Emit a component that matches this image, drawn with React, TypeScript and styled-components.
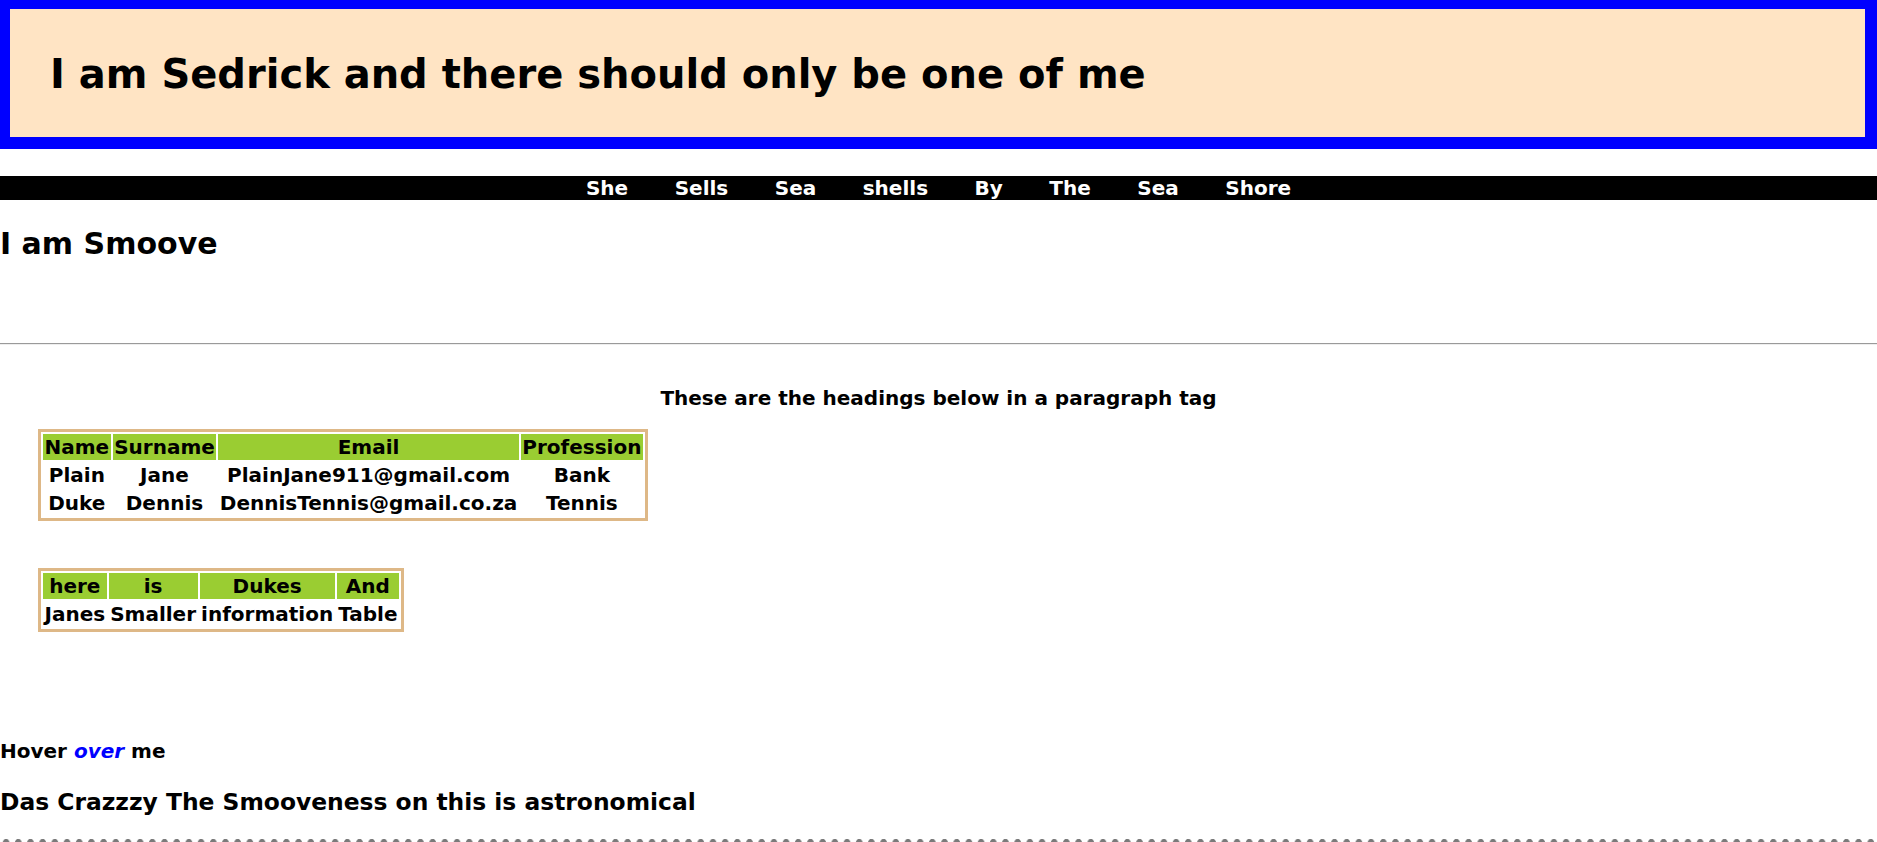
import React from "react";
import styled, { createGlobalStyle } from "styled-components";

const GlobalStyle = createGlobalStyle`
  html, body { margin: 0; padding: 0; background: #ffffff; }
  body {
    font-family: "DejaVu Sans", Verdana, sans-serif;
    font-weight: bold;
    color: #000000;
  }
`;

const Page = styled.div`
  display: flex;
  flex-direction: column;
  width: 100%;
`;

const Banner = styled.header`
  display: flex;
  align-items: center;
  height: 128px;
  border-style: solid;
  border-color: #0000ff;
  border-width: 9px 12px 12px 10px;
  background: #ffe4c4;
  padding-left: 40px;
`;

const BannerTitle = styled.h1`
  margin: 2px 0 0;
  font-size: 40px;
  line-height: 48px;
  font-weight: bold;
`;

const NavBar = styled.nav`
  margin-top: 27px;
  height: 24px;
  background: #000000;
  display: flex;
  justify-content: center;
  gap: 46.5px;
`;

const NavItem = styled.span`
  color: #ffffff;
  font-size: 20px;
  line-height: 24px;
  font-weight: bold;
`;

const SubTitle = styled.h2`
  margin: 26px 0 0;
  font-size: 30px;
  line-height: 35px;
  font-weight: bold;
`;

const Divider = styled.hr`
  margin: 82px 0 0;
  height: 0;
  border: 0;
  border-top: 1px solid #9a9a9a;
  border-bottom: 1px solid #eeeeee;
`;

const Intro = styled.p`
  margin: 41px 0 0;
  text-align: center;
  font-size: 20px;
  line-height: 24px;
`;

const Table = styled.table<{ $gap: number }>`
  margin: ${(p) => p.$gap}px 0 0 38px;
  align-self: flex-start;
  border: 3px solid #deb887;
  border-spacing: 2px;
  font-size: 20px;
  line-height: 24px;
  font-weight: bold;
`;

const HeadCell = styled.th`
  background: #9acd32;
  padding: 1px 1.5px;
  text-align: center;
`;

const Cell = styled.td`
  padding: 1px 1.5px;
  text-align: center;
`;

const HoverLine = styled.p`
  margin: 107px 0 0;
  font-size: 20px;
  line-height: 24px;
`;

const Accent = styled.em`
  color: #0000ff;
`;

const Closing = styled.h3`
  margin: 25px 0 0;
  font-size: 23.4px;
  line-height: 28px;
  font-weight: bold;
`;

const DottedRule = styled.div`
  margin-top: 21px;
  height: 10px;
  background-image: radial-gradient(circle at center, #7a7a7a 0, #7a7a7a 2.8px, transparent 3.4px);
  background-size: 12.2px 10px;
  background-repeat: repeat-x;
  background-position: 0 0;
`;

const navItems = ["She", "Sells", "Sea", "shells", "By", "The", "Sea", "Shore"];

const people = [
  ["Plain", "Jane", "PlainJane911@gmail.com", "Bank"],
  ["Duke", "Dennis", "DennisTennis@gmail.co.za", "Tennis"],
];

export default function App() {
  return (
    <Page>
      <GlobalStyle />
      <Banner>
        <BannerTitle>I am Sedrick and there should only be one of me</BannerTitle>
      </Banner>
      <NavBar>
        {navItems.map((n, i) => (
          <NavItem key={i}>{n}</NavItem>
        ))}
      </NavBar>
      <SubTitle>I am Smoove</SubTitle>
      <Divider />
      <Intro>These are the headings below in a paragraph tag</Intro>
      <Table $gap={19}>
        <thead>
          <tr>
            <HeadCell>Name</HeadCell>
            <HeadCell>Surname</HeadCell>
            <HeadCell>Email</HeadCell>
            <HeadCell>Profession</HeadCell>
          </tr>
        </thead>
        <tbody>
          {people.map((row, i) => (
            <tr key={i}>
              {row.map((c, j) => (
                <Cell key={j}>{c}</Cell>
              ))}
            </tr>
          ))}
        </tbody>
      </Table>
      <Table $gap={47}>
        <thead>
          <tr>
            <HeadCell>here</HeadCell>
            <HeadCell>is</HeadCell>
            <HeadCell>Dukes</HeadCell>
            <HeadCell>And</HeadCell>
          </tr>
        </thead>
        <tbody>
          <tr>
            <Cell>Janes</Cell>
            <Cell>Smaller</Cell>
            <Cell>information</Cell>
            <Cell>Table</Cell>
          </tr>
        </tbody>
      </Table>
      <HoverLine>
        Hover <Accent>over</Accent> me
      </HoverLine>
      <Closing>Das Crazzzy The Smooveness on this is astronomical</Closing>
      <DottedRule />
    </Page>
  );
}
